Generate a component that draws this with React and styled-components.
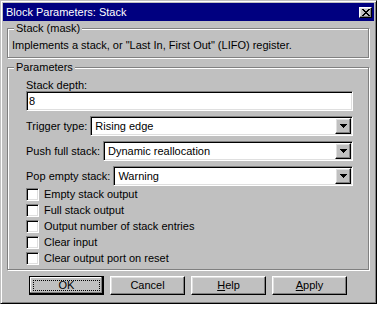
import React from "react";
import styled, { createGlobalStyle } from "styled-components";

const GlobalStyle = createGlobalStyle`
  html, body { margin: 0; padding: 0; background: #fff; }
  body {
    font-family: "Liberation Sans", Arial, sans-serif;
    font-size: 11px;
    line-height: 13px;
    color: #000;
  }
  *, *::before, *::after { box-sizing: border-box; }
`;

const Window = styled.div`
  width: 377px;
  height: 304px;
  background: #c0c0c0;
  border: 1px solid;
  border-color: #c0c0c0 #000 #000 #c0c0c0;
  box-shadow: inset 1px 1px #fff, inset -1px -1px #808080;
  padding: 2px;
  display: flex;
  flex-direction: column;
`;

const TitleBar = styled.div`
  flex: none;
  height: 18px;
  background: #000080;
  color: #fff;
  display: flex;
  align-items: center;
  justify-content: space-between;
  padding: 0 2px 0 3px;
`;

const TitleText = styled.span`
  white-space: nowrap;
`;

const raised = `
  background: #c0c0c0;
  border: 1px solid;
  border-color: #fff #000 #000 #fff;
  box-shadow: inset -1px -1px #808080, inset 1px 1px #dfdfdf;
`;

const sunken = `
  background: #fff;
  border: 1px solid;
  border-color: #808080 #fff #fff #808080;
  box-shadow: inset 1px 1px #000, inset -1px -1px #dfdfdf;
`;

const CloseButton = styled.div`
  ${raised}
  width: 13px;
  height: 11px;
  display: flex;
  align-items: center;
  justify-content: center;
`;

const Body = styled.div`
  flex: 1;
  display: flex;
  flex-direction: column;
  padding: 1px 5px 0 4px;
`;

const Group = styled.fieldset`
  margin: ${(p) => p.$mt || 0}px 0 0 0;
  min-width: 0;
  border: 1px solid #808080;
  box-shadow: inset 1px 1px #fff, 1px 1px #fff;
  padding: ${(p) => p.$pt}px 4px ${(p) => p.$pb}px 4px;
`;

const Legend = styled.legend`
  padding: 0 2px;
  margin-left: 2px;
  line-height: 13px;
  height: 13px;
  background: #c0c0c0;
`;

const Description = styled.div`
  white-space: nowrap;
`;

const Fields = styled.div`
  display: flex;
  flex-direction: column;
  margin: 0 11px 0 14px;
`;

const FieldLabel = styled.div`
  height: 12px;
  line-height: 13px;
  white-space: nowrap;
`;

const Edit = styled.div`
  ${sunken}
  height: 20px;
  padding-left: 2px;
  display: flex;
  align-items: center;
`;

const SelectRow = styled.div`
  display: flex;
  align-items: center;
  gap: 3px;
  margin-top: 5px;
  white-space: nowrap;
`;

const Select = styled.div`
  ${sunken}
  flex: 1;
  height: 20px;
  padding: 1px;
  display: flex;
  align-items: center;
`;

const SelectValue = styled.span`
  flex: 1;
  padding-left: 3px;
  white-space: nowrap;
`;

const ArrowButton = styled.div`
  ${raised}
  width: 16px;
  height: 16px;
  display: flex;
  align-items: center;
  justify-content: center;
`;

const CheckList = styled.div`
  display: flex;
  flex-direction: column;
`;

const CheckRow = styled.label`
  height: 16px;
  display: flex;
  align-items: center;
  gap: 5px;
  white-space: nowrap;
`;

const CheckBox = styled.span`
  ${sunken}
  width: 13px;
  height: 13px;
  flex: none;
`;

const ButtonRow = styled.div`
  display: flex;
  gap: 6px;
  margin-top: 6px;
  padding-left: 22px;
`;

const Button = styled.div`
  ${raised}
  width: 75px;
  height: 19px;
  display: flex;
  align-items: center;
  justify-content: center;
  padding: 3px;
  ${(p) =>
    p.$default &&
    `
    border: 1px solid #000;
    box-shadow: inset -1px -1px #000, inset -2px -2px #808080, inset 1px 1px #fff;
  `}
`;

const Focus = styled.span`
  flex: 1;
  align-self: stretch;
  display: flex;
  align-items: center;
  justify-content: center;
  border: 1px dotted #000;
`;

const Arrow = () => (
  <svg width="7" height="4" viewBox="0 0 7 4" shapeRendering="crispEdges">
    <path d="M0 0H7V1H6V2H5V3H4V4H3V3H2V2H1V1H0Z" fill="#000" />
  </svg>
);

const CloseGlyph = () => (
  <svg width="8" height="7" viewBox="0 0 8 7" shapeRendering="crispEdges">
    <path
      d="M0 0H2V1H3V2H5V1H6V0H8V1H7V2H6V3H5V4H6V5H7V6H8V7H6V6H5V5H3V6H2V7H0V6H1V5H2V4H3V3H2V2H1V1H0Z"
      fill="#000"
    />
  </svg>
);

const Dropdown = ({ label, value }) => (
  <SelectRow>
    <span>{label}</span>
    <Select>
      <SelectValue>{value}</SelectValue>
      <ArrowButton>
        <Arrow />
      </ArrowButton>
    </Select>
  </SelectRow>
);

const checks = [
  "Empty stack output",
  "Full stack output",
  "Output number of stack entries",
  "Clear input",
  "Clear output port on reset",
];

export default function App() {
  return (
    <>
      <GlobalStyle />
      <Window>
        <TitleBar>
          <TitleText>Block Parameters: Stack</TitleText>
          <CloseButton>
            <CloseGlyph />
          </CloseButton>
        </TitleBar>
        <Body>
          <Group $pt={4} $pb={5}>
            <Legend>Stack (mask)</Legend>
            <Description>
              Implements a stack, or "Last In, First Out" (LIFO) register.
            </Description>
          </Group>
          <Group $mt={3} $pt={5} $pb={3}>
            <Legend>Parameters</Legend>
            <Fields>
              <FieldLabel>Stack depth:</FieldLabel>
              <Edit>8</Edit>
              <Dropdown label="Trigger type:" value="Rising edge" />
              <Dropdown label="Push full stack:" value="Dynamic reallocation" />
              <Dropdown label="Pop empty stack:" value="Warning" />
              <CheckList>
                {checks.map((c) => (
                  <CheckRow key={c}>
                    <CheckBox />
                    <span>{c}</span>
                  </CheckRow>
                ))}
              </CheckList>
            </Fields>
          </Group>
          <ButtonRow>
            <Button $default>
              <Focus>OK</Focus>
            </Button>
            <Button>Cancel</Button>
            <Button>
              <span>
                <u>H</u>elp
              </span>
            </Button>
            <Button>
              <span>
                <u>A</u>pply
              </span>
            </Button>
          </ButtonRow>
        </Body>
      </Window>
    </>
  );
}
